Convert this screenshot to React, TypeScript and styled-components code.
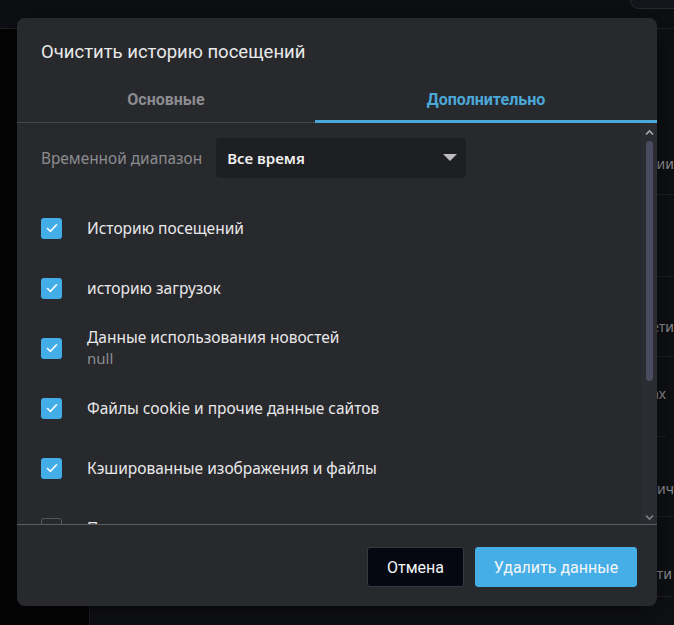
import React from "react";
import styled, { createGlobalStyle } from "styled-components";

const GlobalStyle = createGlobalStyle`
  html, body { margin: 0; padding: 0; background: #0f1014; overflow: hidden; }
  * { box-sizing: border-box; }
`;

const BODY_FONT = `"Noto Sans", "Open Sans", sans-serif`;
const TITLE_FONT = `Roboto, "Liberation Sans", sans-serif`;

/* ---------- background page ---------- */
const Page = styled.div`
  width: 674px;
  height: 625px;
  display: grid;
  grid-template-rows: 29px 1fr;
  position: relative;
  overflow: hidden;
  font-family: ${BODY_FONT};
`;

const TopBar = styled.div`
  background: #0e0f13;
  border-bottom: 1px solid #1f2025;
  display: flex;
  justify-content: flex-end;
  align-items: flex-start;
`;

const SearchPill = styled.div`
  width: 48px;
  height: 9px;
  margin-right: -4px;
  background: #15161b;
  border: 1px solid #2a2b31;
  border-top: none;
  border-bottom-left-radius: 10px;
`;

const Body = styled.div`
  display: grid;
  grid-template-columns: 90px 1fr;
`;

const Sidebar = styled.div`
  background: #040405;
  border-right: 1px solid #1d1e23;
`;

const Main = styled.div`
  background: #0f1014;
  display: flex;
  flex-direction: column;
  align-items: flex-end;
  padding-top: 88px;
  overflow: hidden;
`;

const BgRow = styled.div<{ $h: number; $pb: number; $pr: number }>`
  width: 460px;
  flex: none;
  height: ${(p) => p.$h}px;
  border-bottom: 1px solid #1f2026;
  display: flex;
  align-items: flex-end;
  justify-content: flex-end;
  padding-bottom: ${(p) => p.$pb}px;
  margin-right: ${(p) => -p.$pr}px;
  padding-right: ${(p) => Math.max(p.$pr, 0)}px;
  color: #8e8f94;
  font-size: 14px;
  line-height: 20px;
  white-space: nowrap;
`;

/* ---------- dialog ---------- */
const Overlay = styled.div`
  position: absolute;
  inset: 0;
  padding: 18px 17px 19px 17px;
  display: flex;
  align-items: flex-start;
`;

const Dialog = styled.div`
  width: 640px;
  height: 588px;
  background: #28292d;
  border-radius: 8px;
  display: flex;
  flex-direction: column;
  overflow: hidden;
  box-shadow: 0 4px 24px rgba(0, 0, 0, 0.5);
`;

const Title = styled.h2`
  margin: 0;
  padding: 22px 24px 0 24px;
  height: 58px;
  font-family: ${TITLE_FONT};
  font-weight: 400;
  font-size: 18.5px;
  line-height: 24px;
  color: #e9e9ea;
`;

const Tabs = styled.div`
  display: grid;
  grid-template-columns: 298px 1fr;
  border-bottom: 1px solid #45464b;
`;

const Tab = styled.div<{ $active?: boolean }>`
  height: 47px;
  display: flex;
  align-items: center;
  justify-content: center;
  font-family: ${TITLE_FONT};
  font-weight: 700;
  font-size: 16px;
  color: ${(p) => (p.$active ? "#4ba9d9" : "#8c8c90")};
  border-bottom: 3px solid ${(p) => (p.$active ? "#4ba9d9" : "transparent")};
  margin-bottom: -1px;
  padding-top: 2px;
`;

const ContentArea = styled.div`
  height: 402px;
  display: flex;
  border-bottom: 1px solid #5b5c61;
`;

const List = styled.div`
  flex: 1;
  overflow: hidden;
  padding: 15px 0 0 24px;
`;

const RangeRow = styled.div`
  display: flex;
  align-items: center;
  gap: 14px;
  height: 40px;
  margin-bottom: 20px;
`;

const RangeLabel = styled.span`
  font-size: 15.4px;
  color: #8c8c90;
`;

const Select = styled.div`
  width: 250px;
  height: 40px;
  border-radius: 4px;
  background: #1e1f22;
  display: flex;
  align-items: center;
  justify-content: space-between;
  padding: 0 9px 0 11px;
  font-size: 15px;
  font-weight: 600;
  color: #f0f0f0;
`;

const CheckRow = styled.div`
  height: 60px;
  display: flex;
  align-items: center;
  gap: 25px;
`;

const Box = styled.div<{ $checked: boolean }>`
  width: 21px;
  height: 21px;
  flex: none;
  border-radius: 3px;
  background: ${(p) => (p.$checked ? "#43ade8" : "transparent")};
  border: ${(p) => (p.$checked ? "none" : "1.5px solid #55565b")};
  display: flex;
  align-items: center;
  justify-content: center;
`;

const LabelCol = styled.div`
  display: flex;
  flex-direction: column;
`;

const Label = styled.span`
  font-size: 15.5px;
  line-height: 21px;
  color: #e8e8e9;
`;

const SubLabel = styled.span`
  font-size: 15px;
  line-height: 21px;
  color: #8c8c90;
`;

const ScrollTrack = styled.div`
  width: 16px;
  background: #2b2c32;
  display: flex;
  flex-direction: column;
  align-items: center;
  padding: 6px 0 3px 0;
`;

const Arrow = styled.svg`
  width: 9px;
  height: 7px;
  flex: none;
`;

const Thumb = styled.div`
  width: 7px;
  height: 240px;
  border-radius: 4px;
  background: #4a4c5f;
  margin-top: 5px;
`;

const Spacer = styled.div`
  flex: 1;
`;

const Footer = styled.div`
  flex: 1;
  display: flex;
  justify-content: flex-end;
  align-items: flex-start;
  gap: 11px;
  padding: 22px 20px 0 0;
`;

const Button = styled.button<{ $primary?: boolean }>`
  height: 40px;
  width: ${(p) => (p.$primary ? 162 : 97)}px;
  padding: 0;
  border-radius: 3px;
  border: 1px solid ${(p) => (p.$primary ? "#45aee6" : "#363942")};
  background: ${(p) => (p.$primary ? "#45aee6" : "#050811")};
  color: #f4f6f8;
  font-family: ${TITLE_FONT};
  font-size: 16px;
  font-weight: 400;
  cursor: pointer;
`;

const Check = () => (
  <svg width="14" height="14" viewBox="0 0 14 14">
    <polyline
      points="2.5,7.5 5.5,10.3 11.5,3.8"
      fill="none"
      stroke="#ffffff"
      strokeWidth="1.6"
      strokeLinecap="round"
      strokeLinejoin="round"
    />
  </svg>
);

const items: { label: string; sub?: string; checked: boolean }[] = [
  { label: "Историю посещений", checked: true },
  { label: "историю загрузок", checked: true },
  { label: "Данные использования новостей", sub: "null", checked: true },
  { label: "Файлы cookie и прочие данные сайтов", checked: true },
  { label: "Кэшированные изображения и файлы", checked: true },
  { label: "Пароли", checked: false },
];

const bgRows = [
  { h: 78, pb: 20, pr: 6, t: "Подсказки в адресной строке из истории" },
  { h: 82, pb: 20, pr: 0, t: "" },
  { h: 80, pb: 19, pr: 6, t: "Защита от отслеживания и конфиденциальность сети" },
  { h: 80, pb: 32, pr: -8, t: "Показывать советы в обзорах" },
  { h: 80, pb: 17, pr: 0, t: "Отправлять отчёты о сбоях автоматич" },
  { h: 80, pb: 12, pr: -2, t: "Настройки прокси-сервера и сети" },
];

export default function App() {
  return (
    <>
      <GlobalStyle />
      <Page>
        <TopBar>
          <SearchPill />
        </TopBar>
        <Body>
          <Sidebar />
          <Main>
            {bgRows.map((r, i) => (
              <BgRow key={i} $h={r.h} $pb={r.pb} $pr={r.pr}>
                {r.t}
              </BgRow>
            ))}
          </Main>
        </Body>
        <Overlay>
          <Dialog>
            <Title>Очистить историю посещений</Title>
            <Tabs>
              <Tab>Основные</Tab>
              <Tab $active>Дополнительно</Tab>
            </Tabs>
            <ContentArea>
              <List>
                <RangeRow>
                  <RangeLabel>Временной диапазон</RangeLabel>
                  <Select>
                    <span>Все время</span>
                    <svg width="14" height="8" viewBox="0 0 14 8">
                      <polygon points="0,0 14,0 7,7" fill="#bdbdc1" />
                    </svg>
                  </Select>
                </RangeRow>
                {items.map((it) => (
                  <CheckRow key={it.label}>
                    <Box $checked={it.checked}>{it.checked && <Check />}</Box>
                    <LabelCol>
                      <Label>{it.label}</Label>
                      {it.sub && <SubLabel>{it.sub}</SubLabel>}
                    </LabelCol>
                  </CheckRow>
                ))}
              </List>
              <ScrollTrack>
                <Arrow viewBox="0 0 9 7">
                  <polyline points="1,5.5 4.5,2 8,5.5" fill="none" stroke="#a7a9b3" strokeWidth="1.6" />
                </Arrow>
                <Thumb />
                <Spacer />
                <Arrow viewBox="0 0 9 7">
                  <polyline points="1,1.5 4.5,5 8,1.5" fill="none" stroke="#7d7f8a" strokeWidth="1.6" />
                </Arrow>
              </ScrollTrack>
            </ContentArea>
            <Footer>
              <Button>Отмена</Button>
              <Button $primary>Удалить данные</Button>
            </Footer>
          </Dialog>
        </Overlay>
      </Page>
    </>
  );
}
